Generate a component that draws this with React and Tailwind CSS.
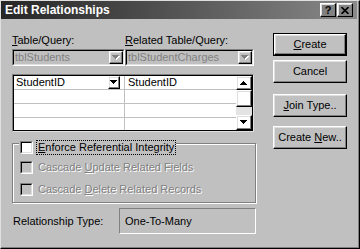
import React from 'react';

const raised =
  'border border-t-white border-l-white border-r-black border-b-black shadow-[inset_-1px_-1px_0_#808080,inset_1px_1px_0_#dfdfdf]';

// little pixel triangle used on combo and scroll buttons
function Arrow({ up = false, disabled = false }) {
  const rows = [[0, 7], [1, 5], [2, 3], [3, 1]];
  const pts = rows.map(([x, w], k) => ({ x, y: up ? 3 - k : k, w }));
  return (
    <svg width="8" height="5" shapeRendering="crispEdges">
      {disabled &&
        pts.map((p, i) => (
          <rect key={'s' + i} x={p.x + 1} y={p.y + 1} width={p.w} height="1" fill="#fff" />
        ))}
      {pts.map((p, i) => (
        <rect key={i} x={p.x} y={p.y} width={p.w} height="1" fill={disabled ? '#808080' : '#000'} />
      ))}
    </svg>
  );
}

function Combo({ text, width }) {
  return (
    <div className={`${width} h-[17px] border border-t-[#808080] border-l-[#808080] border-r-white border-b-white`}>
      <div className="h-full flex items-center border border-t-black border-l-black border-r-[#dfdfdf] border-b-[#dfdfdf] bg-[#c0c0c0]">
        <span className="flex-1 pl-px leading-[13px] text-[#808080]">{text}</span>
        <div className={`w-[14px] h-full flex items-center justify-center ${raised}`}>
          <Arrow disabled />
        </div>
      </div>
    </div>
  );
}

function CheckRow({ disabled, children }) {
  return (
    <div className="h-[13px] flex items-center">
      <div className="w-[13px] h-[13px] border border-t-[#808080] border-l-[#808080] border-r-white border-b-white">
        <div
          className={`w-full h-full border border-t-black border-l-black border-r-[#dfdfdf] border-b-[#dfdfdf] ${
            disabled ? 'bg-[#c0c0c0]' : 'bg-white'
          }`}
        />
      </div>
      <span
        className={`ml-[5px] leading-[13px] ${
          disabled ? 'text-[#808080] [text-shadow:1px_1px_0_#fff]' : 'text-black'
        }`}
      >
        {children}
      </span>
    </div>
  );
}

function Button({ children, isDefault, className = '' }) {
  const inner = (
    <div className={`w-full h-full flex items-center justify-center bg-[#c0c0c0] ${raised}`}>
      <span className="leading-[13px]">{children}</span>
    </div>
  );
  return (
    <div className={`w-[74px] h-[23px] ${isDefault ? 'border border-black' : ''} ${className}`}>{inner}</div>
  );
}

export default function App() {
  return (
    <div className="w-[360px] h-[249px] overflow-hidden bg-[#c0c0c0] border border-t-[#dfdfdf] border-l-[#dfdfdf] border-r-black border-b-black font-['Liberation_Sans',Arial,sans-serif] text-[11px] text-black">
      <div className="h-full flex flex-col pr-px border-r border-b border-r-[#808080] border-b-[#808080]">
        {/* title bar */}
        <div className="h-[18px] flex items-center pl-[4px] pr-[4px] bg-linear-to-r from-[#262626] to-[#8a8a8a]">
          <span className="flex-1 text-white font-bold text-[12px] leading-[18px]">Edit Relationships</span>
          <div className={`w-[16px] h-[14px] flex items-center justify-center ${raised}`}>
            <span className="font-bold text-[11px] leading-[11px]">?</span>
          </div>
          <div className={`ml-px w-[16px] h-[14px] flex items-center justify-center ${raised}`}>
            <svg width="8" height="7" viewBox="0 0 8 7">
              <path d="M0.5 0 L7.5 7 M7.5 0 L0.5 7" stroke="#000" strokeWidth="1.6" />
            </svg>
          </div>
        </div>

        {/* body */}
        <div className="flex-1 flex pl-[11px] pt-[14px]">
          <div className="w-[244px] flex flex-col">
            <div className="h-[14px] flex leading-[14px]">
              <span className="w-[113px]">
                <u className="underline-offset-1">T</u>able/Query:
              </span>
              <span>
                <u className="underline-offset-1">R</u>elated Table/Query:
              </span>
            </div>

            <div className="mt-[2px] flex">
              <Combo text="tblStudents" width="w-[113px]" />
              <Combo text="tblStudentCharges" width="w-[129px]" />
            </div>

            {/* field grid */}
            <div className="mt-[8px] w-[242px] h-[58px] border border-t-[#808080] border-l-[#808080] border-r-[#dfdfdf] border-b-[#dfdfdf]">
              <div className="h-full flex border border-black bg-white">
                <div className="flex-1 flex flex-col">
                  {[0, 1, 2, 3].map((i) => (
                    <div
                      key={i}
                      className={`flex ${i < 3 ? 'h-[14px] border-b border-b-[#c0c0c0]' : 'h-[12px]'}`}
                    >
                      <div className="w-[111px] flex items-center border-r border-r-[#c0c0c0]">
                        {i === 0 && (
                          <>
                            <span className="flex-1 pl-[2px] leading-[13px]">StudentID</span>
                            <div className={`w-[12px] h-[13px] mr-[4px] flex items-center justify-center ${raised}`}>
                              <Arrow />
                            </div>
                          </>
                        )}
                      </div>
                      <div className="flex-1 flex items-center pl-[3px]">
                        {i === 0 && <span className="leading-[13px]">StudentID</span>}
                      </div>
                    </div>
                  ))}
                </div>
                <div className="w-[16px] flex flex-col">
                  <div className={`h-[14px] flex items-center justify-center ${raised}`}>
                    <Arrow up />
                  </div>
                  <div className={`h-[17px] ${raised}`} />
                  <div className="h-[8px] bg-[#e3e3e3]" />
                  <div className={`h-[15px] flex items-center justify-center ${raised}`}>
                    <Arrow />
                  </div>
                </div>
              </div>
            </div>

            {/* referential integrity group */}
            <div className="relative mt-[11px] w-[244px] h-[60px] border border-[#808080] shadow-[inset_1px_1px_0_#fff,1px_1px_0_#fff] pl-[7px] pt-[17px]">
              <div className="absolute left-[6px] top-[-4px] pl-px pr-px bg-[#c0c0c0] h-[15px] flex items-center">
                <div className="w-[13px] h-[13px] border border-t-[#808080] border-l-[#808080] border-r-white border-b-white">
                  <div className="w-full h-full border border-t-black border-l-black border-r-[#dfdfdf] border-b-[#dfdfdf] bg-white" />
                </div>
                <span className="ml-[4px] px-px outline-1 outline-dotted outline-black leading-[13px]">
                  <u className="underline-offset-1">E</u>nforce Referential Integrity
                </span>
              </div>
              <CheckRow disabled>
                Cascade <u className="underline-offset-1">U</u>pdate Related Fields
              </CheckRow>
              <div className="mt-[9px]">
                <CheckRow disabled>
                  Cascade <u className="underline-offset-1">D</u>elete Related Records
                </CheckRow>
              </div>
            </div>

            <div className="mt-[5px] h-[26px] flex items-center">
              <span className="w-[107px] pl-px">Relationship Type:</span>
              <div className="flex-1 h-full flex items-center pl-[5px] border border-t-[#808080] border-l-[#808080] border-r-white border-b-white">
                One-To-Many
              </div>
            </div>
          </div>

          {/* buttons */}
          <div className="ml-[17px] flex flex-col">
            <Button isDefault>
              <u className="underline-offset-1">C</u>reate
            </Button>
            <Button className="mt-[4px]">Cancel</Button>
            <Button className="mt-[11px]">
              <u className="underline-offset-1">J</u>oin Type..
            </Button>
            <Button className="mt-[9px]">
              Create <u className="underline-offset-1">N</u>ew..
            </Button>
          </div>
        </div>
      </div>
    </div>
  );
}
